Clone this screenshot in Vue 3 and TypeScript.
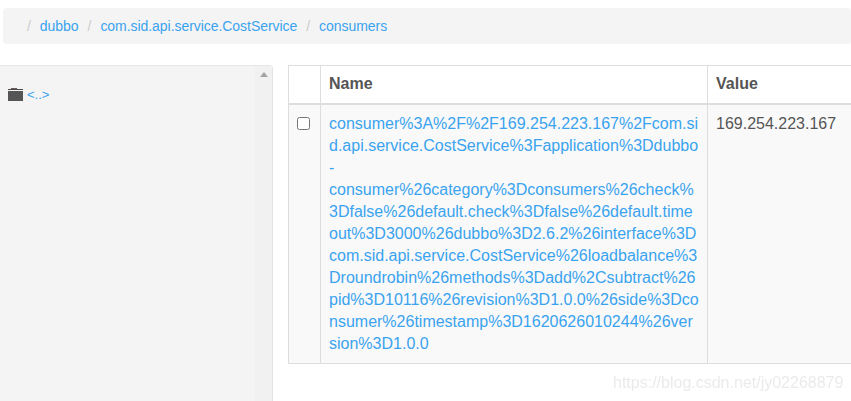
<script setup lang="ts">
const crumbs: string[] = ['dubbo', 'com.sid.api.service.CostService', 'consumers']
const consumer =
  'consumer%3A%2F%2F169.254.223.167%2Fcom.sid.api.service.CostService%3Fapplication%3Ddubbo-consumer%26category%3Dconsumers%26check%3Dfalse%26default.check%3Dfalse%26default.timeout%3D3000%26dubbo%3D2.6.2%26interface%3Dcom.sid.api.service.CostService%26loadbalance%3Droundrobin%26methods%3Dadd%2Csubtract%26pid%3D10116%26revision%3D1.0.0%26side%3Dconsumer%26timestamp%3D1620626010244%26version%3D1.0.0'
</script>

<template>
  <div class="page">
    <nav class="crumbs">
      <template v-for="c in crumbs" :key="c">
        <span class="sep">/</span>
        <a class="link">{{ c }}</a>
      </template>
    </nav>
    <div class="main">
      <aside class="side">
        <div class="tree">
          <div class="entry">
            <svg class="folder" width="15" height="13" viewBox="0 0 15 13">
              <rect x="3" y="0" width="6" height="1" fill="#6b5a55" />
              <rect x="0" y="1" width="15" height="1" fill="#4a4a4a" />
              <rect x="0" y="3" width="15" height="10" fill="#555555" />
            </svg>
            <a class="link up">&lt;..&gt;</a>
          </div>
        </div>
        <div class="scroll"><span class="arrow"></span></div>
      </aside>
      <div class="content">
        <table class="grid">
          <colgroup>
            <col class="c1" />
            <col class="c2" />
            <col class="c3" />
          </colgroup>
          <thead>
            <tr>
              <th></th>
              <th>Name</th>
              <th>Value</th>
            </tr>
          </thead>
          <tbody>
            <tr>
              <td class="check"><input type="checkbox" /></td>
              <td><a class="link">{{ consumer }}</a></td>
              <td>169.254.223.167</td>
            </tr>
          </tbody>
        </table>
      </div>
    </div>
    <div class="mark">https://blog.csdn.net/jy02268879</div>
  </div>
</template>

<style scoped>
.page {
  position: relative;
  width: 851px;
  height: 401px;
  overflow: hidden;
  background: #fff;
  color: #555;
  font-family: "Liberation Sans", Arial, sans-serif;
  font-size: 14px;
  padding-top: 8px;
  box-sizing: border-box;
}
.link {
  color: #3aa3ef;
}
.crumbs {
  margin-left: 3px;
  height: 36px;
  box-sizing: border-box;
  background: #f4f4f4;
  border-radius: 4px;
  padding-left: 24px;
  display: flex;
  align-items: center;
  line-height: 36px;
  letter-spacing: -0.05px;
}
.sep {
  color: #ccc;
  padding: 0 9px 0 0;
}
.crumbs .link {
  margin-right: 9px;
}
.main {
  display: flex;
  margin-top: 21px;
  gap: 16px;
  align-items: flex-start;
}
.side {
  width: 273px;
  height: 336px;
  flex: none;
  box-sizing: border-box;
  display: flex;
  background: #f4f4f4;
  border-top: 1px solid #e6e6e6;
  border-right: 1px solid #e3e3e3;
  border-top-right-radius: 4px;
}
.tree {
  flex: 1;
  padding: 21px 0 0 8px;
}
.entry {
  display: flex;
  align-items: center;
  gap: 4px;
  font-size: 13px;
  height: 14px;
}
.scroll {
  width: 17px;
  background: #f1f1f1;
  display: flex;
  justify-content: center;
  padding-top: 6px;
  box-sizing: border-box;
}
.arrow {
  width: 0;
  height: 0;
  border-left: 4px solid transparent;
  border-right: 4px solid transparent;
  border-bottom: 5px solid #a3a3a3;
}
.content {
  flex: none;
  width: 600px;
  margin-left: -1px;
}
.grid {
  table-layout: fixed;
  width: 600px;
  border-collapse: collapse;
  font-size: 16px;
  line-height: 22px;
}
.c1 {
  width: 32px;
}
.c2 {
  width: 387px;
}
.c3 {
  width: 181px;
}
th,
td {
  border: 1px solid #ddd;
  padding: 8px;
  vertical-align: top;
  text-align: left;
}
th {
  font-size: 16px;
  height: 38px;
  line-height: 20px;
  padding-top: 7px;
  padding-bottom: 9px;
  box-sizing: border-box;
  vertical-align: bottom;
  border-bottom: 2px solid #ddd;
  color: #555;
}
td {
  background: #f9f9f9;
  overflow-wrap: break-word;
}
.check input {
  margin: 4px 0 0 0;
  width: 13px;
  height: 13px;
}
.mark {
  position: absolute;
  left: 613px;
  top: 374px;
  color: #ddd;
  font-size: 16px;
  opacity: 0.6;
  filter: blur(0.6px);
}
</style>
